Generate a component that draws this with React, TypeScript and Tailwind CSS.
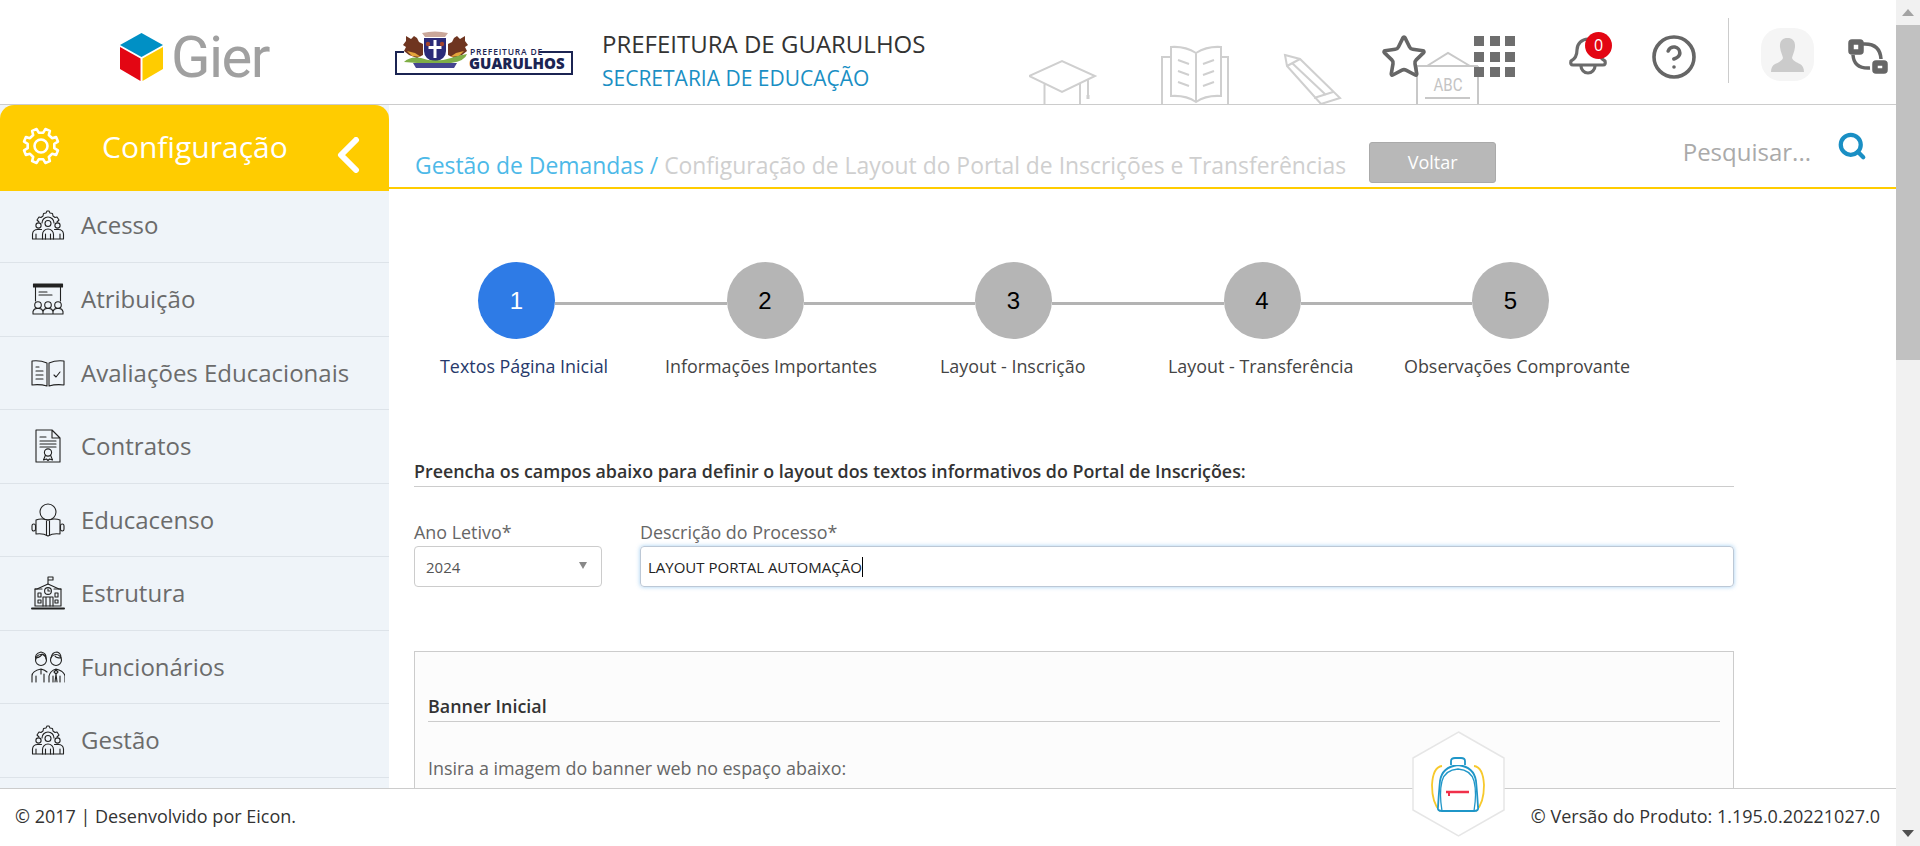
import { CircleHelp, Search, Star } from "lucide-react";
import type { ReactNode } from "react";

function SidebarIcon({ children }: { children: ReactNode }) {
  return (
    <svg viewBox="0 0 34 34" className="w-[34px] h-[34px] shrink-0" fill="none" stroke="#222" strokeWidth="1.1" strokeLinejoin="round" strokeLinecap="round">
      {children}
    </svg>
  );
}

const GearPeople = () => (
  <SidebarIcon>
    <path d="M8 14 L6 12 L8 9 L10 9.5 L12 8 L12.5 5.5 L15 5 L16 3 L18 3 L19 5 L21.5 5.5 L22 8 L24 9.5 L26 9 L28 12 L26 14" />
    <path d="M11 15a6 6 0 0 1 12 0" />
    <circle cx="17" cy="15.5" r="3" />
    <circle cx="7.5" cy="17.5" r="2.6" />
    <circle cx="26.5" cy="17.5" r="2.6" />
    <path d="M11.5 31v-4.5a5.5 5.5 0 0 1 11 0V31z" />
    <path d="M1.5 31v-5a5 5 0 0 1 5-4.5h4M32.5 31v-5a5 5 0 0 0-5-4.5h-4M1.5 31h10M22.5 31h10M5 31v-5M29 31v-5M14.5 31v-5M19.5 31v-5" />
  </SidebarIcon>
);

const menu = [
  {
    label: "Acesso",
    height: "h-[72px] pb-[3px]",
    icon: <GearPeople />,
  },
  {
    label: "Atribuição",
    height: "h-[73.5px]",
    icon: (
      <SidebarIcon>
        <rect x="2.5" y="2" width="29" height="3" fill="#222" />
        <path d="M4.5 5v14M29.5 5v14M8 10h8M8 13h13" />
        <circle cx="7" cy="23" r="3.3" />
        <circle cx="17" cy="23" r="3.3" />
        <circle cx="27" cy="23" r="3.3" />
        <path d="M2 32v-2.5a4 4 0 0 1 4-3h2a4 4 0 0 1 4 3V32zM12 32v-2.5a4 4 0 0 1 4-3h2a4 4 0 0 1 4 3V32zM22 32v-2.5a4 4 0 0 1 4-3h2a4 4 0 0 1 4 3V32z" />
      </SidebarIcon>
    ),
  },
  {
    label: "Avaliações Educacionais",
    height: "h-[73.5px]",
    icon: (
      <SidebarIcon>
        <path d="M16 7 Q9 4 1 5v24q8-1 15 1zM18 30q7-2 15-1V5q-8-1-15 2z" />
        <path d="M5 11h3M5 15h7M5 19h7M5 23h7M23 19l2 2 4-5" />
      </SidebarIcon>
    ),
  },
  {
    label: "Contratos",
    height: "h-[73.5px]",
    icon: (
      <SidebarIcon>
        <path d="M5 1h16l8 8v24H5zM21 1v8h8" />
        <path d="M9 8h6M9 12h16M9 15h16M9 18h16" />
        <circle cx="17" cy="23.5" r="3.6" />
        <path d="M14.5 26l-2 5 3-1 1.5 1.5 1.5-1.5 3 1-2-5" />
      </SidebarIcon>
    ),
  },
  {
    label: "Educacenso",
    height: "h-[73.5px]",
    icon: (
      <SidebarIcon>
        <circle cx="17" cy="9" r="8" />
        <path d="M17 17 Q10 15 5 17v14q7-1 12 2 5-3 12-2V17q-5-2-12 0z" />
        <path d="M15.5 18v14M18.5 18v14" />
        <rect x="1" y="21" width="3.5" height="7" rx="1.7" />
        <rect x="29.5" y="21" width="3.5" height="7" rx="1.7" />
      </SidebarIcon>
    ),
  },
  {
    label: "Estrutura",
    height: "h-[73.5px]",
    icon: (
      <SidebarIcon>
        <path d="M17 8V1h5v3h-5" />
        <path d="M17 8 L6 13H4v17h26V13h-2z" />
        <path d="M4 13h7M23 13h7" />
        <circle cx="17" cy="15" r="3.4" />
        <path d="M17 13v2h2M12 30V21h10v9M15 21v9M19 21v9M7 17h3v4H7zM24 17h3v4h-3zM7 24h3v3H7zM24 24h3v3h-3z" />
        <path d="M1 32.5h32" strokeWidth="2" />
      </SidebarIcon>
    ),
  },
  {
    label: "Funcionários",
    height: "h-[73.5px]",
    icon: (
      <SidebarIcon>
        <circle cx="10" cy="10" r="5.5" />
        <path d="M5 8q5-1 6-4 4 1 4 5M5 9Q3 4 10 2q6 1 5 7" />
        <circle cx="25" cy="10" r="5.5" />
        <path d="M20 8q1-6 6-6 4 1 4 6-5 0-6-2" />
        <path d="M1 32v-6q0-5 9-7 4 1 6 3M18 32v-6q1-5 7-7 8 2 9 7v6M5 32v-6M13 32v-8M22 32v-6M29 32v-6M10 19v5M25 20l-2 2 2 2-1 8M25 20l2 2-2 2 1 8" />
      </SidebarIcon>
    ),
  },
  {
    label: "Gestão",
    height: "h-[73.5px]",
    icon: <GearPeople />,
  },
];

// 8 tooth cog, same as the one in the yellow title bar
function gearPath() {
  const pt = (deg: number, r: number) => {
    const a = (deg * Math.PI) / 180;
    return `${(20 + r * Math.cos(a)).toFixed(2)} ${(20 + r * Math.sin(a)).toFixed(2)}`;
  };
  let d = "";
  for (let i = 0; i < 8; i++) {
    const a = i * 45 + 22.5;
    d += `${i === 0 ? "M" : "L"}${pt(a - 13, 13.5)} L${pt(a - 8, 17.5)} L${pt(a + 8, 17.5)} L${pt(a + 13, 13.5)} `;
  }
  return d + "Z";
}

function CityLogo() {
  return (
    <svg viewBox="0 0 178 44" className="w-[178px] h-[44px]">
      <path d="M9 21H1v22h176V21h-33" fill="#fff" stroke="#1b2452" strokeWidth="2" />
      <text x="75" y="24" fontSize="8.5" fontFamily="'Open Sans', sans-serif" fontWeight="600" letterSpacing="0.8" fill="#1b2452">PREFEITURA DE</text>
      <text x="74" y="37.5" fontSize="15" fontFamily="'Open Sans', sans-serif" fontWeight="800" fill="#1b2452">GUARULHOS</text>
      {/* eagles */}
      <path d="M28 24 L22 27 L14 24 L9 20 L11 16 L8 14 L11 10 L11 5 L16 8 L19 5 L22 7 L24 11 L28 13z" fill="#6f3520" />
      <path d="M53 24 L59 27 L67 24 L72 20 L70 16 L73 14 L70 10 L70 5 L65 8 L62 5 L59 7 L57 11 L53 13z" fill="#6f3520" />
      <path d="M12 20l8 2 6 4-9-1zM69 20l-8 2-6 4 9-1z" fill="#e3a43a" />
      {/* shield */}
      <path d="M29 7h22v13q0 8-11 11-11-3-11-11z" fill="#2b2b78" />
      <path d="M38.5 9h3v6h5v3h-5v9h-3v-9h-5v-3h5z" fill="#fff" />
      <circle cx="33" cy="13" r="2.2" fill="#a5452c" />
      <circle cx="47" cy="13" r="2.2" fill="#a5452c" />
      {/* crown */}
      <path d="M27 2q13-3 26 0l-3 4H30z" fill="#c9a79a" />
      {/* ribbon */}
      <path d="M9 31q6-6 17-4 14 5 30 0 9-3 16-4-2 7-16 9H22z" fill="#7fae46" />
      <path d="M18 32h44l-3 5H21z" fill="#45458f" />
    </svg>
  );
}

function GierLogo() {
  return (
    <div className="flex items-center gap-[8px]">
      <svg viewBox="0 0 43 48" className="w-[43px] h-[48px]">
        <path d="M21.5 0 43 12 21.5 24 0 12z" fill="#0090c5" />
        <path d="M0 14l20.5 11.5V48L0 36z" fill="#e30613" />
        <path d="M43 14 22.5 25.5V48L43 36z" fill="#ffcc00" />
      </svg>
      <span className="font-['Roboto',sans-serif] text-[58px] leading-none font-normal text-[#a0a0a0] tracking-[-1.5px]">Gier</span>
    </div>
  );
}

function Backpack() {
  return (
    <svg viewBox="0 0 54 56" className="w-[54px] h-[56px]" fill="none">
      <path d="M11 9Q2 10 1 28q0 18 8 26M43 9q9 1 10 19 0 18-8 26" stroke="#f7c92c" strokeWidth="1.8" />
      <path d="M7 50q-1 4 4 4h32q5 0 4-4-1-16-2-26-2-14-18-16-16 2-18 16-1 10-2 26z" fill="#fff" stroke="#1f96c8" strokeWidth="1.8" />
      <path d="M11 54q-3-18 0-30 3-11 16-12 13 1 16 12 3 12 0 30" stroke="#1f96c8" strokeWidth="1.3" />
      <path d="M20 8V4q0-3 4-3h6q4 0 4 3v4" fill="#fff" stroke="#1f96c8" strokeWidth="1.8" />
      <path d="M15 35h23" stroke="#f0304a" strokeWidth="2.5" />
      <path d="M18 36v3" stroke="#f0304a" strokeWidth="2" />
    </svg>
  );
}

function HeaderDecor() {
  return (
    <svg viewBox="0 0 452 67" className="w-[452px] h-[67px]" fill="none" stroke="#cfcfcf" strokeWidth="2">
      {/* cap */}
      <path d="M0 39 33 24 66 39 33 55zM15.5 47v20M51 47v20M59 42v16" />
      <path d="M59 58v4" strokeWidth="3" />
      {/* book */}
      <path d="M167 65V16q-11-7-25-6v49q15-1 25 6 10-7 25-6V10q-14-1-25 6M142 20h-9v47M192 20h7v47" />
      <path d="M149 23l11 4M149 34l11 4M149 45l11 4M185 23l-11 4M185 34l-11 4M185 45l-11 4" />
      {/* pencil */}
      <path d="M256 18l15 4 40 39-19 6-34-38zM263 26l34 32M258 29l13-7M285 61l19-6" />
      {/* board */}
      <path d="M398 29l21-13 22 13M388 29h61M388 29v38M449 29v38M396 61h45" stroke="#c8c8c8" />
      <text x="419" y="54" textAnchor="middle" fontSize="18" fontFamily="'Roboto', sans-serif" fill="#c4c4c4" stroke="none" textLength="29" lengthAdjust="spacingAndGlyphs">ABC</text>
    </svg>
  );
}

function BellIcon() {
  return (
    <svg viewBox="0 0 40 41" className="w-[40px] h-[41px]" fill="none" stroke="#6b6b6b" strokeWidth="3.2" strokeLinejoin="round">
      <path d="M3 25q6-3 6-11a11 11 0 0 1 22 0q0 8 6 11 1 4-2 4H5q-3 0-2-4z" />
      <path d="M13 30a7 7 0 0 0 14 0" />
    </svg>
  );
}

function SwitchIcon() {
  return (
    <svg viewBox="0 0 42 38" className="w-[42px] h-[38px]" fill="none" stroke="#666">
      <rect x="3" y="4" width="10" height="10" rx="1" strokeWidth="5.5" />
      <rect x="27" y="25" width="10" height="8" rx="1" strokeWidth="5.5" />
      <path d="M15 6q17-1 18 15M5 17q1 14 17 13" strokeWidth="3.5" />
    </svg>
  );
}

const steps = [
  { n: 1, active: true },
  { n: 2 },
  { n: 3 },
  { n: 4 },
  { n: 5 },
];

const stepLabels = [
  { text: "Textos Página Inicial", className: "w-[167px] text-[#27396b]" },
  { text: "Informações Importantes", className: "ml-[58px] w-[211px] text-[#444]" },
  { text: "Layout - Inscrição", className: "ml-[64px] w-[145px] text-[#444]" },
  { text: "Layout - Transferência", className: "ml-[83px] w-[185px] text-[#444]" },
  { text: "Observações Comprovante", className: "ml-[51px] w-[226px] text-[#444]" },
];

export default function App() {
  return (
    <div className="flex h-screen overflow-hidden bg-white font-['Open_Sans',sans-serif]">
      <div className="relative flex flex-1 min-w-0 flex-col">
        <header className="relative h-[105px] shrink-0 border-b border-[#ccc] flex items-center overflow-hidden">
          <div className="absolute left-[1029px] top-[37px]">
            <HeaderDecor />
          </div>
          <div className="w-[389px] shrink-0 flex justify-center pt-[10px]">
            <GierLogo />
          </div>
          <div className="ml-[6px] mt-[1px]">
            <CityLogo />
          </div>
          <div className="ml-[29px] flex flex-col gap-[4px] pt-[16px]">
            <span className="text-[24px] leading-[32px] text-[#333]">PREFEITURA DE GUARULHOS</span>
            <span className="text-[21px] leading-[28px] text-[#1a8fc4]">SECRETARIA DE EDUCAÇÃO</span>
          </div>
          <div className="relative ml-auto flex items-center mr-[6px]">
            <Star className="mt-[9px] w-[48px] h-[48px] text-[#666]" strokeWidth={1.8} />
            <div className="mt-[9px] ml-[46px] grid grid-cols-3 gap-[5.5px] w-[41px]">
              {Array.from({ length: 9 }).map((_, i) => (
                <div key={i} className="h-[10px] bg-[#6e6e6e]" />
              ))}
            </div>
            <div className="mt-[9px] relative ml-[53px]">
              <BellIcon />
              <span className="absolute left-[17px] top-[-4px] w-[27px] h-[27px] rounded-full bg-[#e30613] text-white text-[16px] leading-[27px] text-center">0</span>
            </div>
            <CircleHelp className="mt-[9px] ml-[42px] w-[48px] h-[48px] text-[#666]" strokeWidth={1.8} />
            <div className="mb-[3px] ml-[30px] w-px h-[65px] bg-[#ccc]" />
            <div className="mt-[5px] ml-[32px] w-[53px] h-[53px] rounded-[20px] bg-[#f5f5f5] flex items-end justify-center overflow-hidden pb-[9px]">
              <svg viewBox="0 0 33 34" className="w-[33px] h-[34px]" fill="#cbcbcb">
                <path d="M16.5 0c5 0 8 3 7.5 9-.5 5-2.5 8-3 11 1 3 5 4.5 8 6 2.5 1.5 4 4 4 8H0c0-4 1.5-6.5 4-8 3-1.5 7-3 8-6-.5-3-2.5-6-3-11C8.500 3 11.500 0 16.500 0z" />
              </svg>
            </div>
            <div className="mt-[9px] ml-[34px]">
              <SwitchIcon />
            </div>
          </div>
        </header>

        <div className="flex flex-1 min-h-0">
          <aside className="w-[389px] shrink-0 bg-[#eff4f9] flex flex-col">
            <div className="h-[86px] shrink-0 bg-[#ffcc00] rounded-t-[14px] flex items-center text-white">
              <svg viewBox="0 0 40 40" className="ml-[21px] mb-[4px] w-[40px] h-[40px]" fill="none" stroke="#fff" strokeWidth="2.6" strokeLinejoin="round">
                <path d={gearPath()} />
                <circle cx="20" cy="20" r="6.5" />
              </svg>
              <span className="ml-[41px] text-[30px] leading-none pb-[3px]">Configuração</span>
              <svg viewBox="0 0 24 36" className="ml-auto mr-[29px] mt-[14px] w-[24px] h-[36px]" fill="none" stroke="#fff" strokeWidth="6" strokeLinecap="round" strokeLinejoin="round">
                <path d="M20 3 5 18l15 15" />
              </svg>
            </div>
            {menu.map((item) => (
              <div key={item.label} className={`${item.height} shrink-0 border-b border-[#dde3e9] flex items-center pl-[31px] gap-[16px]`}>
                {item.icon}
                <span className="text-[24px] text-[#6b6b6b] leading-none">{item.label}</span>
              </div>
            ))}
          </aside>

          <main className="flex-1 min-w-0 overflow-hidden">
            <div className="h-[84px] border-b-2 border-[#ffcc00] flex pl-[26px] pr-[29px]">
              <div className="mt-[46px] text-[22.9px] leading-[30px] whitespace-nowrap">
                <span className="text-[#4db9e8]">Gestão de Demandas / </span>
                <span className="text-[#cfcfcf]">Configuração de Layout do Portal de Inscrições e Transferências</span>
              </div>
              <button className="ml-[23px] mt-[37px] h-[41px] w-[127px] shrink-0 rounded-[3px] border border-[#aaa] bg-[#b8b8b8] text-white text-[18px]">Voltar</button>
              <span className="ml-auto mt-[32px] text-[24px] leading-[30px] text-[#aaa] whitespace-nowrap">Pesquisar...</span>
              <Search className="ml-[26px] mt-[26px] w-[30px] h-[30px] shrink-0 text-[#1a8fc4]" strokeWidth={3.4} />
            </div>

            <div className="pl-[25px] pr-[162px]">
              <div className="mt-[73px] ml-[64px] flex items-center">
                {steps.map((s, i) => (
                  <div key={s.n} className="flex items-center">
                    <div className={`w-[77px] h-[77px] rounded-full flex items-center justify-center font-['Liberation_Sans',sans-serif] text-[24px] ${s.active ? "bg-[#2e7be6] text-white" : "bg-[#b5b5b5] text-black"}`}>
                      {s.n}
                    </div>
                    {i < steps.length - 1 && <div className="w-[171.5px] h-[3px] mt-[6px] bg-[#b3b3b3]" />}
                  </div>
                ))}
              </div>
              <div className="mt-[16px] ml-[26px] flex text-[17.9px] leading-[22px] text-center whitespace-nowrap">
                {stepLabels.map((l) => (
                  <div key={l.text} className={l.className}>{l.text}</div>
                ))}
              </div>

              <h2 className="mt-[83px] text-[17.85px] leading-[22px] font-semibold text-[#333] border-b border-[#ccc] pb-[4px] whitespace-nowrap">
                Preencha os campos abaixo para definir o layout dos textos informativos do Portal de Inscrições:
              </h2>

              <div className="mt-[34px] flex gap-[38px]">
                <div className="w-[188px] shrink-0">
                  <label className="block text-[17.9px] leading-[22px] mb-[3px] text-[#666]">Ano Letivo*</label>
                  <div className="h-[41px] rounded-[4px] border border-[#ccc] flex items-center justify-between pl-[11px] pr-[14px]">
                    <span className="text-[15px] text-[#555] mt-[2px]">2024</span>
                    <span className="w-0 h-0 border-x-[4px] border-t-[7px] border-x-transparent border-t-[#888] mb-[2px]" />
                  </div>
                </div>
                <div className="flex-1 min-w-0">
                  <label className="block text-[17.9px] leading-[22px] mb-[3px] text-[#666]">Descrição do Processo*</label>
                  <div className="h-[41px] rounded-[4px] border border-[#bcc8d6] shadow-[0_0_4px_rgba(102,175,233,0.6)] flex items-center pl-[7px]">
                    <span className="text-[15px] text-[#222] border-r border-black leading-[20px]">LAYOUT PORTAL AUTOMAÇÃO</span>
                  </div>
                </div>
              </div>

              <section className="mt-[64px] border border-[#ccc] bg-[#fcfcfc] px-[13px] pt-[43px] h-[300px]">
                <h3 className="text-[17.9px] leading-[22px] font-semibold text-[#333] border-b border-[#ccc] pb-[4px]">Banner Inicial</h3>
                <p className="mt-[35px] text-[17.9px] leading-[22px] text-[#666]">Insira a imagem do banner web no espaço abaixo:</p>
              </section>
            </div>
          </main>
        </div>

        <footer className="relative h-[58px] shrink-0 bg-white border-t border-[#ccc] flex items-center justify-between pl-[15px] pr-[16px] text-[18px] text-[#333] z-10">
          <span className="pb-[3px]">© 2017 | Desenvolvido por Eicon.</span>
          <span className="pb-[3px]">© Versão do Produto: 1.195.0.20221027.0</span>
        </footer>

        <div className="absolute left-[1412px] top-[731px] z-20 w-[93px] h-[106px]">
          <svg viewBox="0 0 93 106" className="absolute inset-0 w-full h-full">
            <path d="M46.5 1 92 27v52l-45.5 26L1 79V27z" fill="#fff" stroke="#e6e6e6" strokeWidth="1.5" />
          </svg>
          <div className="absolute left-[19px] top-[26px]">
            <Backpack />
          </div>
        </div>
      </div>

      <div className="w-[24px] shrink-0 bg-[#f1f1f1] flex flex-col items-center">
        <div className="h-[25px] flex items-center justify-center">
          <span className="w-0 h-0 border-x-[6px] border-b-[7px] border-x-transparent border-b-[#a3a3a3]" />
        </div>
        <div className="w-full h-[335px] bg-[#c1c1c1]" />
        <div className="mt-auto h-[25px] flex items-center justify-center">
          <span className="w-0 h-0 border-x-[6px] border-t-[7px] border-x-transparent border-t-[#505050]" />
        </div>
      </div>
    </div>
  );
}
